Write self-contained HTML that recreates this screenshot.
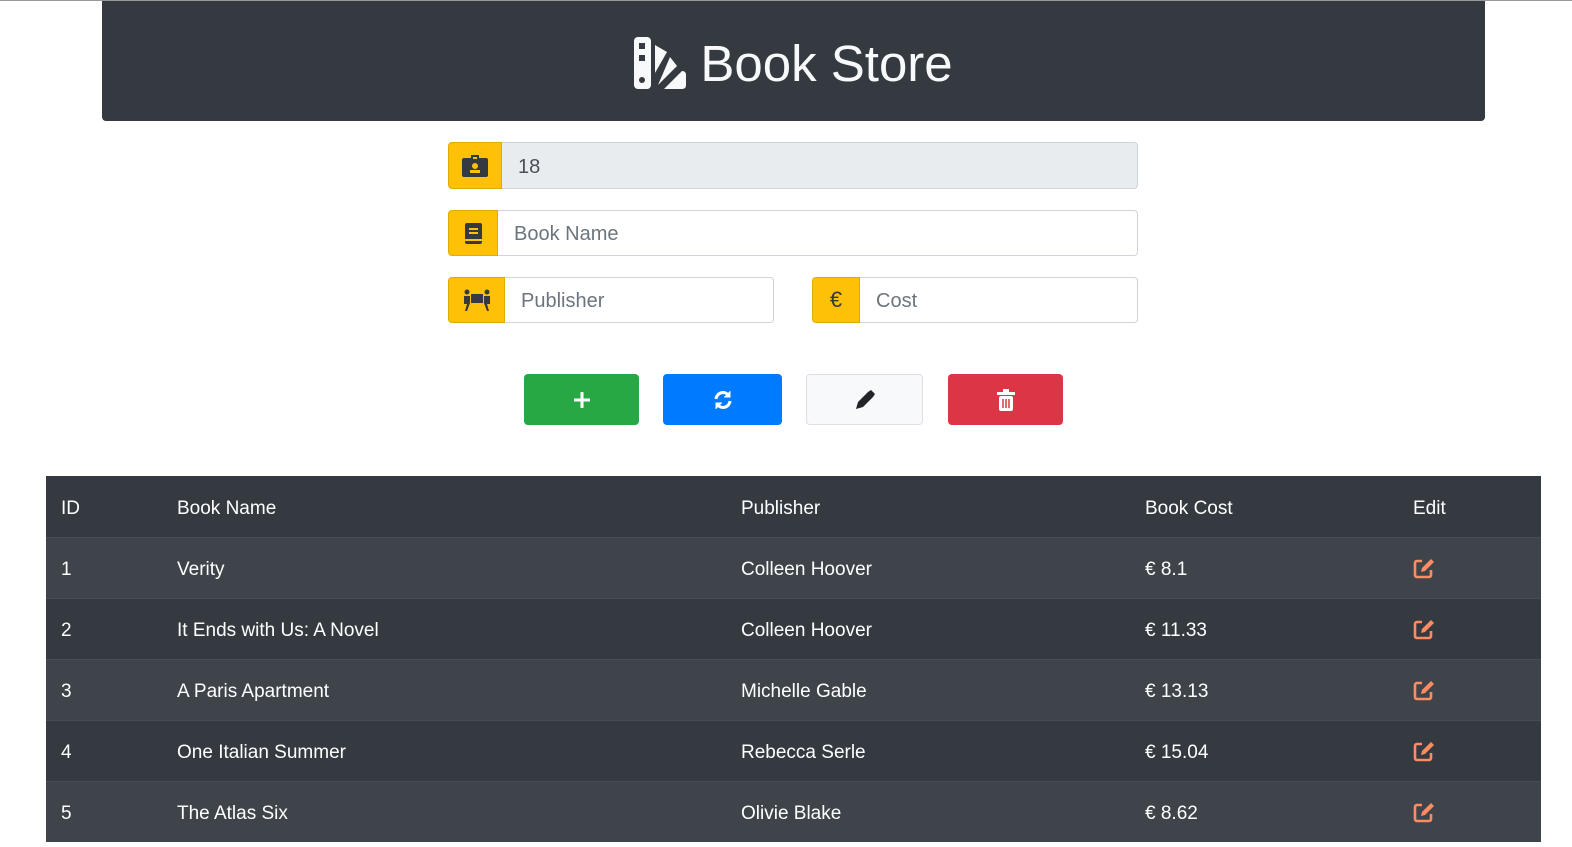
<!DOCTYPE html>
<html><head><style>
html,body{width:1572px}
body{margin:0;background:#fff;font-family:"Segoe UI","Liberation Sans",sans-serif;color:#495057;height:847px;overflow:hidden;border-top:1px solid #999;box-sizing:border-box;position:relative}
.hdr{position:absolute;left:102px;top:0;width:1383px;height:120px;background:#343a40;border-radius:0 0 4px 4px;color:#f8f9fa;display:flex;align-items:center;justify-content:center;font-size:51px;font-weight:500;padding-top:4px;box-sizing:border-box}
.hdr svg{margin-right:14px}
.ig{position:absolute;height:46px;display:flex}
.pre{background:#ffc107;border:1px solid #e0ac00;border-radius:4px 0 0 4px;display:flex;align-items:center;justify-content:center;box-sizing:border-box;color:#343a40;font-size:22px}
.inp{flex:1;border:1px solid #ced4da;border-left:none;border-radius:0 4px 4px 0;display:flex;align-items:center;padding-left:16px;padding-top:3px;font-size:20px;color:#6c757d;box-sizing:border-box}
.btn{position:absolute;top:373px;height:51px;border-radius:4px;display:flex;align-items:center;justify-content:center;box-sizing:border-box}
table{position:absolute;left:46px;top:475px;width:1495px;border-collapse:collapse;color:#fff;font-size:19px}
td,th{height:61px;padding:5px 0 0 15px;text-align:left;font-weight:400;border-top:1px solid #454d55;box-sizing:border-box}
tr{background:#343a40}
tbody tr:nth-child(odd){background:#3e444a}
</style></head><body>
<div class="hdr"><svg width="52" height="52" viewBox="0 0 52 52"><rect x="0" y="0" width="17" height="52" rx="4" fill="#f8f9fa"/><rect x="5" y="6" width="6" height="6" fill="#343a40"/><rect x="5" y="18" width="6" height="6" fill="#343a40"/><circle cx="8" cy="43" r="3" fill="#343a40"/><path d="M21 8 L33 15 L21 36Z" fill="#f8f9fa"/><path d="M36 20 L43 29 L24 48Z" fill="#f8f9fa"/><path d="M30 52 L48 34 Q52 34 52 38 L52 48 Q52 52 48 52Z" fill="#f8f9fa"/></svg>Book Store</div>

<div class="ig" style="left:448px;top:141px;width:690px;height:47px"><div class="pre" style="width:54px"><svg width="26" height="22" viewBox="0 0 26 22"><rect x="0" y="3" width="26" height="19" rx="2" fill="#343a40"/><rect x="9" y="0" width="8" height="6" fill="#343a40"/><rect x="11" y="2" width="4" height="2" fill="#ffc107"/><circle cx="13" cy="11" r="3" fill="#ffc107"/><rect x="8" y="15" width="10" height="3" fill="#ffc107"/></svg></div><div class="inp" style="background:#e9ecef;color:#495057">18</div></div>
<div class="ig" style="left:448px;top:209px;width:690px"><div class="pre" style="width:50px"><svg width="17" height="21" viewBox="0 0 17 21"><rect width="17" height="21" rx="2" fill="#343a40"/><rect x="4" y="5" width="9" height="2" fill="#ffc107"/><rect x="4" y="9" width="9" height="2" fill="#ffc107"/><rect x="0" y="16" width="17" height="2" fill="#ffc107"/></svg></div><div class="inp">Book Name</div></div>
<div class="ig" style="left:448px;top:276px;width:326px"><div class="pre" style="width:57px"><svg width="28" height="22" viewBox="0 0 28 22"><circle cx="4" cy="3" r="2.5" fill="#343a40"/><circle cx="24" cy="3" r="2.5" fill="#343a40"/><rect x="8" y="5" width="12" height="9" fill="#343a40"/><path d="M1 7h6v7l-3 8h-2l2-7h-3z M27 7h-6v7l3 8h2l-2-7h3z" fill="#343a40"/></svg></div><div class="inp">Publisher</div></div>
<div class="ig" style="left:812px;top:276px;width:326px"><div class="pre" style="width:48px">€</div><div class="inp">Cost</div></div>

<div class="btn" style="left:524px;width:115px;background:#28a745"><svg width="18" height="18"><path d="M9 1v16M1 9h16" stroke="#fff" stroke-width="3"/></svg></div>
<div class="btn" style="left:663px;width:119px;background:#007bff"><svg width="22" height="22" viewBox="0 0 22 22" fill="none" stroke="#fff" stroke-width="3"><path d="M4 10a7 7 0 0 1 13-3"/><path d="M18 12a7 7 0 0 1-13 3"/><path d="M18 2v6h-6M4 20v-6h6" fill="#fff" stroke-width="1"/></svg></div>
<div class="btn" style="left:806px;width:117px;background:#f8f9fa;border:1px solid #dde0e3"><svg width="22" height="22" viewBox="0 0 22 22"><path d="M2 20l2-7 10-10 5 5-10 10z M14 3l3-2 4 4-2 3z" fill="#212529"/></svg></div>
<div class="btn" style="left:948px;width:115px;background:#dc3545"><svg width="18" height="22" viewBox="0 0 18 22"><rect x="0" y="3" width="18" height="3" fill="#fff"/><rect x="6" y="0" width="6" height="3" fill="#fff"/><rect x="2" y="7" width="14" height="15" rx="2" fill="#fff"/><path d="M6 10v9M9 10v9M12 10v9" stroke="#dc3545" stroke-width="1.5"/></svg></div>

<table>
<thead><tr><th style="width:116px;border-top:none">ID</th><th style="width:564px;border-top:none">Book Name</th><th style="width:404px;border-top:none">Publisher</th><th style="width:268px;border-top:none">Book Cost</th><th style="border-top:none">Edit</th></tr></thead>
<tbody>
<tr><td>1</td><td>Verity</td><td>Colleen Hoover</td><td>€ 8.1</td><td><span class="e"></span></td></tr>
<tr><td>2</td><td>It Ends with Us: A Novel</td><td>Colleen Hoover</td><td>€ 11.33</td><td><span class="e"></span></td></tr>
<tr><td>3</td><td>A Paris Apartment</td><td>Michelle Gable</td><td>€ 13.13</td><td><span class="e"></span></td></tr>
<tr><td>4</td><td>One Italian Summer</td><td>Rebecca Serle</td><td>€ 15.04</td><td><span class="e"></span></td></tr>
<tr><td>5</td><td>The Atlas Six</td><td>Olivie Blake</td><td>€ 8.62</td><td><span class="e"></span></td></tr>
</tbody></table>
<script>
document.querySelectorAll('.e').forEach(e=>e.outerHTML='<svg width="22" height="22" viewBox="0 0 22 22" style="vertical-align:middle;margin-top:-4px"><path d="M9 4H4a2 2 0 0 0-2 2v12a2 2 0 0 0 2 2h12a2 2 0 0 0 2-2v-5" fill="none" stroke="#fd8c63" stroke-width="2.6"/><path d="M8 15l1-4 9-9 3 3-9 9z" fill="#fd8c63"/></svg>');
</script>
</body></html>
